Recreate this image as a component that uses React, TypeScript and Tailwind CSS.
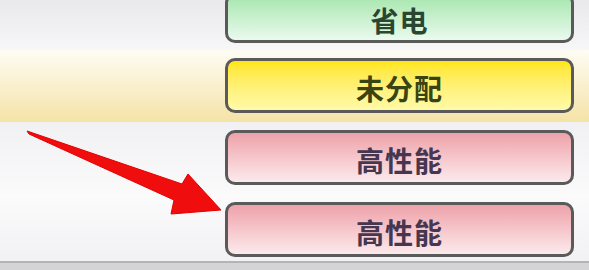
const rows = [
  {
    label: "未分配",
    row: "bg-gradient-to-b from-[#fefcf4] to-[#f5e3a6]",
    btn: "bg-gradient-to-b from-[#ffe600] to-[#fffaa8]",
    text: "text-[#3a4412]",
  },
  {
    label: "高性能",
    row: "bg-gradient-to-b from-[#f1f1f3] to-[#fafafb]",
    btn: "bg-gradient-to-b from-[#eda2aa] to-[#fbeaec]",
    text: "text-[#463650]",
  },
  {
    label: "高性能",
    row: "bg-gradient-to-b from-[#fbfbfc] to-[#f1f1f3]",
    btn: "bg-gradient-to-b from-[#eda2aa] to-[#fbeaec]",
    text: "text-[#463650]",
  },
];

export default function App() {
  return (
    <div className="relative w-[589px] h-[270px] overflow-hidden bg-[#f4f4f6] font-['Noto_Sans_CJK_SC',sans-serif]">
      <div className="flex flex-col">
        {/* first row, its button is cut at the top */}
        <div className="h-[50px] shrink-0 overflow-hidden pl-[225px] pr-[15px] bg-gradient-to-b from-[#e9e9ec] to-[#f7f7f8]">
          <div className="-mt-[7px] h-[50px] rounded-[10px] border-[3px] border-[#5a5a5a] flex items-center justify-center pt-[4px] bg-gradient-to-b from-[#a6e6ae] to-[#eafaee]">
            <span className="text-[28px] font-bold leading-none tracking-[1px] text-[#2a4630]">省电</span>
          </div>
        </div>
        {rows.map((r, i) => (
          <div key={i} className={`h-[72px] shrink-0 pl-[225px] pr-[15px] pt-[8px] ${r.row}`}>
            <div
              className={`h-[55px] rounded-[10px] border-[3px] border-[#5a5a5a] flex items-center justify-center pt-[4px] ${r.btn}`}
            >
              <span className={`text-[28px] font-bold leading-none tracking-[1px] ${r.text}`}>{r.label}</span>
            </div>
          </div>
        ))}
      </div>
      <div className="absolute left-0 right-0 bottom-0 h-[9px] bg-[#d4d4d7] border-t-2 border-[#b4b4b8]" />
      <svg className="absolute left-0 top-0" width="589" height="270">
        <polygon
          points="27,131 182,184 188,174 221,210 171,214 174,200 29,134"
          fill="#f00d0d"
          stroke="#e40000"
          strokeWidth="1"
          strokeLinejoin="round"
        />
      </svg>
    </div>
  );
}
